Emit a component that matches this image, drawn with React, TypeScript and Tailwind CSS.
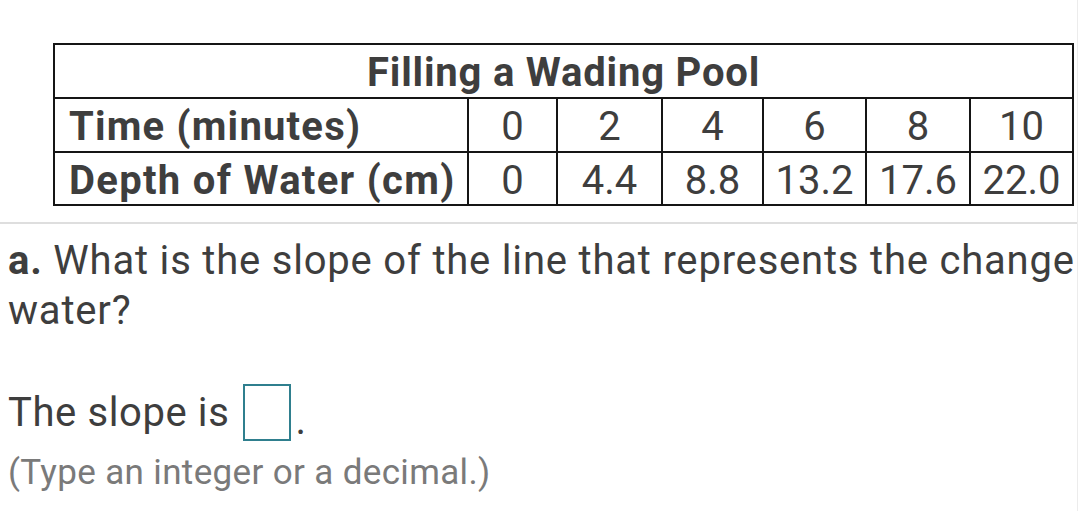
import React from 'react'

const times = ['0', '2', '4', '6', '8', '10']
const depths = ['0', '4.4', '8.8', '13.2', '17.6', '22.0']
const colWidths = ['w-[89px]', 'w-[105px]', 'w-[101px]', 'w-[103px]', 'w-[104px]', 'w-[103px]']

export default function App() {
  return (
    <div className="w-[1080px] h-[511px] overflow-hidden bg-white font-['Roboto',sans-serif] text-[#3e3e3e]">
      <div className="w-[1078px] h-full border-r border-[#ececec]">
        {/* data table */}
        <div className="pt-[43px] pl-[53px] pb-[16px]">
          <table className="border-collapse border-2 border-[#151515] table-fixed w-[1020px]">
            <colgroup>
              <col className="w-[414px]" />
              {colWidths.map((w, i) => (
                <col key={i} className={w} />
              ))}
            </colgroup>
            <tbody>
              <tr className="h-[54px]">
                <td colSpan={7} className="border-2 border-[#151515] text-center text-[40px] font-bold leading-none tracking-[0.8px] pt-[4px]">
                  Filling a Wading Pool
                </td>
              </tr>
              <tr className="h-[54px]">
                <td className="border-2 border-[#151515] pl-[14px] text-[40px] font-bold leading-none tracking-[1.2px] pt-[4px]">
                  Time (minutes)
                </td>
                {times.map((t, i) => (
                  <td key={i} className="border-2 border-[#151515] text-center text-[40px] leading-none pt-[4px]">
                    {t}
                  </td>
                ))}
              </tr>
              <tr className="h-[53px]">
                <td className="border-2 border-[#151515] pl-[14px] text-[40px] font-bold leading-none tracking-[1.3px] pt-[4px] whitespace-nowrap">
                  Depth of Water (cm)
                </td>
                {depths.map((d, i) => (
                  <td key={i} className="border-2 border-[#151515] text-center text-[40px] leading-none pt-[4px]">
                    {d}
                  </td>
                ))}
              </tr>
            </tbody>
          </table>
        </div>

        <div className="h-[2px] bg-[#dedede]" />

        {/* question */}
        <div className="pl-[8px] pt-[12px]">
          <p className="text-[40px] leading-[50px] tracking-[0.8px] whitespace-nowrap">
            <span className="font-bold">a.</span> What is the slope of the line that represents the change
            <br />
            water?
          </p>
          <div className="mt-[48px] flex items-center text-[40px] leading-[50px] tracking-[0.6px]">
            <span>The slope is</span>
            <span className="ml-[14px] inline-block w-[48px] h-[57px] border-2 border-[#2f7f8e]" />
            <span className="ml-[4px] self-end leading-[40px]">.</span>
          </div>
          <p className="mt-[12px] text-[35px] leading-[40px] tracking-[0.35px] text-[#7a7a7a]">(Type an integer or a decimal.)</p>
        </div>
      </div>
    </div>
  )
}
